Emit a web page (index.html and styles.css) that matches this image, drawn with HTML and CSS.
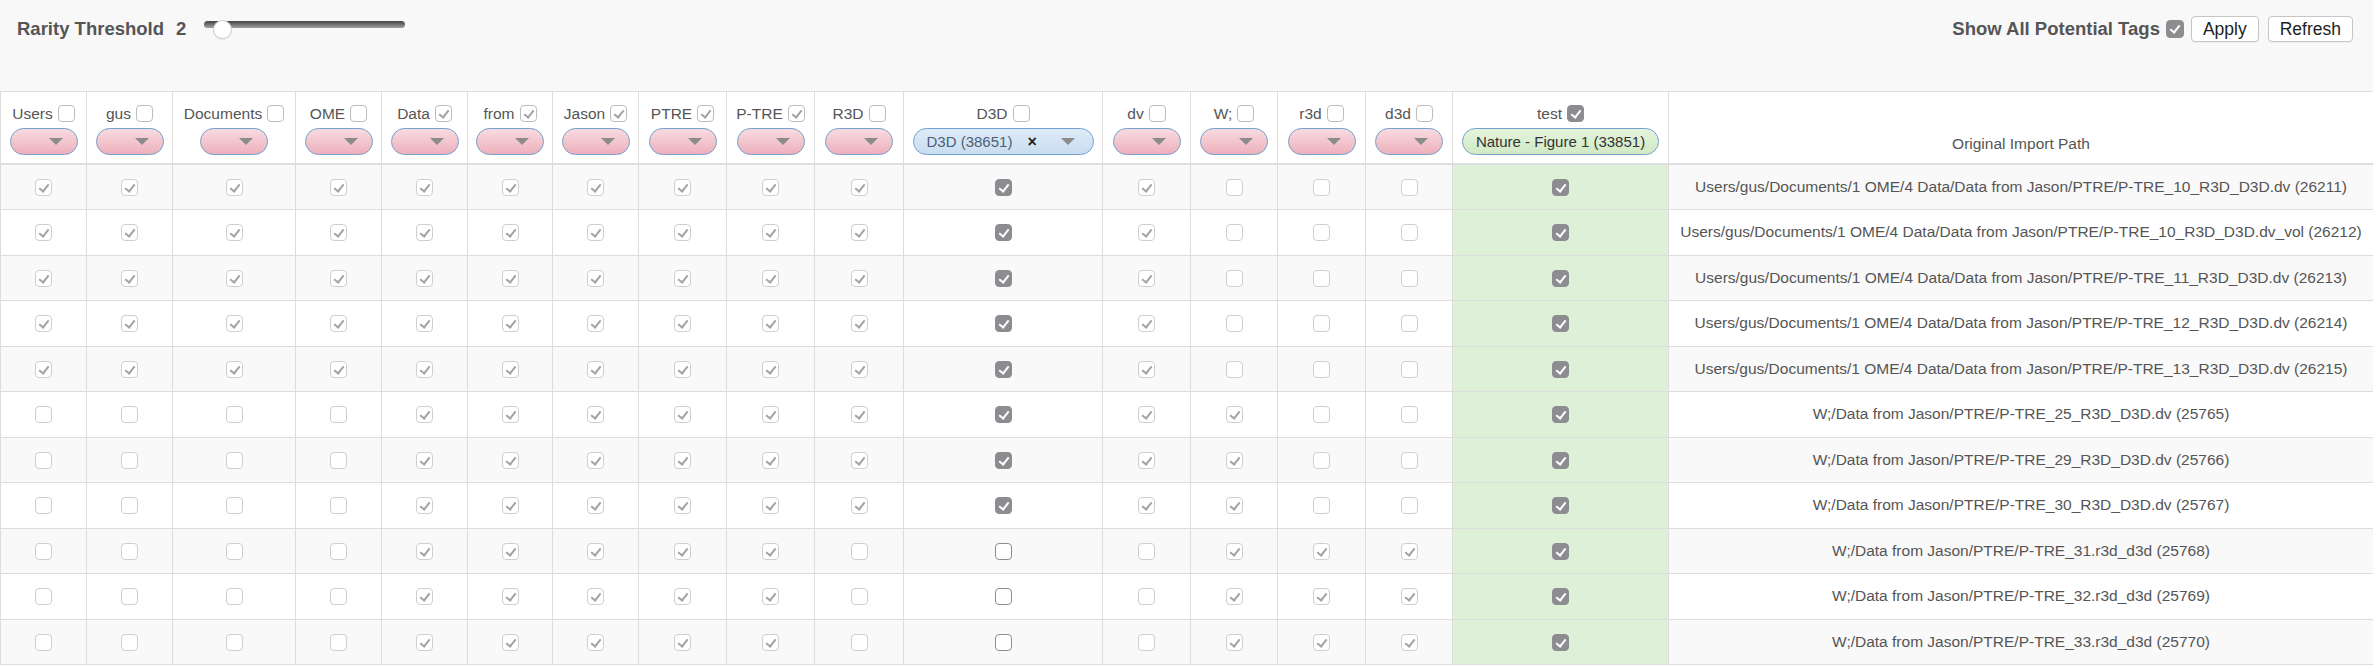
FILE: index.html
```html
<!DOCTYPE html>
<html>
<head>
<meta charset="utf-8">
<link rel="stylesheet" href="styles.css">
</head>
<body>
<div class="toolbar">
  <span class="title">Rarity Threshold</span>
  <span class="title val">2</span>
  <div class="slider"><div class="track"></div><div class="thumb"></div></div>
  <div class="spacer"></div>
  <span class="title">Show All Potential Tags</span>
  <span class="cb dark on topcb"></span>
  <button class="btn">Apply</button>
  <button class="btn">Refresh</button>
</div>
<table class="grid">
  <colgroup>
    <col style="width:86px"><col style="width:86px"><col style="width:123px"><col style="width:86px"><col style="width:86px"><col style="width:85px"><col style="width:86px"><col style="width:88px"><col style="width:88px"><col style="width:89px"><col style="width:199px"><col style="width:88px"><col style="width:87px"><col style="width:88px"><col style="width:87px"><col style="width:216px"><col style="width:705px">
  </colgroup>
  <thead>
    <tr>
      <th><div class="lbl">Users<span class="cb hd"></span></div><div class="pill pink"><span class="tri"></span></div></th>
      <th><div class="lbl">gus<span class="cb hd"></span></div><div class="pill pink"><span class="tri"></span></div></th>
      <th><div class="lbl">Documents<span class="cb hd"></span></div><div class="pill pink"><span class="tri"></span></div></th>
      <th><div class="lbl">OME<span class="cb hd"></span></div><div class="pill pink"><span class="tri"></span></div></th>
      <th><div class="lbl">Data<span class="cb hd on"></span></div><div class="pill pink"><span class="tri"></span></div></th>
      <th><div class="lbl">from<span class="cb hd on"></span></div><div class="pill pink"><span class="tri"></span></div></th>
      <th><div class="lbl">Jason<span class="cb hd on"></span></div><div class="pill pink"><span class="tri"></span></div></th>
      <th><div class="lbl">PTRE<span class="cb hd on"></span></div><div class="pill pink"><span class="tri"></span></div></th>
      <th><div class="lbl">P-TRE<span class="cb hd on"></span></div><div class="pill pink"><span class="tri"></span></div></th>
      <th><div class="lbl">R3D<span class="cb hd"></span></div><div class="pill pink"><span class="tri"></span></div></th>
      <th><div class="lbl">D3D<span class="cb hd"></span></div><div class="pill blue"><span class="ptxt">D3D (38651)</span><span class="x">×</span><span class="tri"></span></div></th>
      <th><div class="lbl">dv<span class="cb hd"></span></div><div class="pill pink"><span class="tri"></span></div></th>
      <th><div class="lbl">W;<span class="cb hd"></span></div><div class="pill pink"><span class="tri"></span></div></th>
      <th><div class="lbl">r3d<span class="cb hd"></span></div><div class="pill pink"><span class="tri"></span></div></th>
      <th><div class="lbl">d3d<span class="cb hd"></span></div><div class="pill pink"><span class="tri"></span></div></th>
      <th><div class="lbl">test<span class="cb dark on"></span></div><div class="pill green">Nature - Figure 1 (33851)</div></th>
      <th class="pathhd">Original Import Path</th>
    </tr>
  </thead>
  <tbody>
    <tr>
      <td><span class="cb on"></span></td><td><span class="cb on"></span></td><td><span class="cb on"></span></td><td><span class="cb on"></span></td><td><span class="cb on"></span></td><td><span class="cb on"></span></td><td><span class="cb on"></span></td><td><span class="cb on"></span></td><td><span class="cb on"></span></td><td><span class="cb on"></span></td>
      <td><span class="cb dark on"></span></td><td><span class="cb on"></span></td><td><span class="cb"></span></td><td><span class="cb"></span></td><td><span class="cb"></span></td>
      <td class="ok"><span class="cb dark on"></span></td>
      <td class="path">Users/gus/Documents/1 OME/4 Data/Data from Jason/PTRE/P-TRE_10_R3D_D3D.dv (26211)</td>
    </tr>
    <tr>
      <td><span class="cb on"></span></td><td><span class="cb on"></span></td><td><span class="cb on"></span></td><td><span class="cb on"></span></td><td><span class="cb on"></span></td><td><span class="cb on"></span></td><td><span class="cb on"></span></td><td><span class="cb on"></span></td><td><span class="cb on"></span></td><td><span class="cb on"></span></td>
      <td><span class="cb dark on"></span></td><td><span class="cb on"></span></td><td><span class="cb"></span></td><td><span class="cb"></span></td><td><span class="cb"></span></td>
      <td class="ok"><span class="cb dark on"></span></td>
      <td class="path">Users/gus/Documents/1 OME/4 Data/Data from Jason/PTRE/P-TRE_10_R3D_D3D.dv_vol (26212)</td>
    </tr>
    <tr>
      <td><span class="cb on"></span></td><td><span class="cb on"></span></td><td><span class="cb on"></span></td><td><span class="cb on"></span></td><td><span class="cb on"></span></td><td><span class="cb on"></span></td><td><span class="cb on"></span></td><td><span class="cb on"></span></td><td><span class="cb on"></span></td><td><span class="cb on"></span></td>
      <td><span class="cb dark on"></span></td><td><span class="cb on"></span></td><td><span class="cb"></span></td><td><span class="cb"></span></td><td><span class="cb"></span></td>
      <td class="ok"><span class="cb dark on"></span></td>
      <td class="path">Users/gus/Documents/1 OME/4 Data/Data from Jason/PTRE/P-TRE_11_R3D_D3D.dv (26213)</td>
    </tr>
    <tr>
      <td><span class="cb on"></span></td><td><span class="cb on"></span></td><td><span class="cb on"></span></td><td><span class="cb on"></span></td><td><span class="cb on"></span></td><td><span class="cb on"></span></td><td><span class="cb on"></span></td><td><span class="cb on"></span></td><td><span class="cb on"></span></td><td><span class="cb on"></span></td>
      <td><span class="cb dark on"></span></td><td><span class="cb on"></span></td><td><span class="cb"></span></td><td><span class="cb"></span></td><td><span class="cb"></span></td>
      <td class="ok"><span class="cb dark on"></span></td>
      <td class="path">Users/gus/Documents/1 OME/4 Data/Data from Jason/PTRE/P-TRE_12_R3D_D3D.dv (26214)</td>
    </tr>
    <tr>
      <td><span class="cb on"></span></td><td><span class="cb on"></span></td><td><span class="cb on"></span></td><td><span class="cb on"></span></td><td><span class="cb on"></span></td><td><span class="cb on"></span></td><td><span class="cb on"></span></td><td><span class="cb on"></span></td><td><span class="cb on"></span></td><td><span class="cb on"></span></td>
      <td><span class="cb dark on"></span></td><td><span class="cb on"></span></td><td><span class="cb"></span></td><td><span class="cb"></span></td><td><span class="cb"></span></td>
      <td class="ok"><span class="cb dark on"></span></td>
      <td class="path">Users/gus/Documents/1 OME/4 Data/Data from Jason/PTRE/P-TRE_13_R3D_D3D.dv (26215)</td>
    </tr>
    <tr>
      <td><span class="cb"></span></td><td><span class="cb"></span></td><td><span class="cb"></span></td><td><span class="cb"></span></td><td><span class="cb on"></span></td><td><span class="cb on"></span></td><td><span class="cb on"></span></td><td><span class="cb on"></span></td><td><span class="cb on"></span></td><td><span class="cb on"></span></td>
      <td><span class="cb dark on"></span></td><td><span class="cb on"></span></td><td><span class="cb on"></span></td><td><span class="cb"></span></td><td><span class="cb"></span></td>
      <td class="ok"><span class="cb dark on"></span></td>
      <td class="path">W;/Data from Jason/PTRE/P-TRE_25_R3D_D3D.dv (25765)</td>
    </tr>
    <tr>
      <td><span class="cb"></span></td><td><span class="cb"></span></td><td><span class="cb"></span></td><td><span class="cb"></span></td><td><span class="cb on"></span></td><td><span class="cb on"></span></td><td><span class="cb on"></span></td><td><span class="cb on"></span></td><td><span class="cb on"></span></td><td><span class="cb on"></span></td>
      <td><span class="cb dark on"></span></td><td><span class="cb on"></span></td><td><span class="cb on"></span></td><td><span class="cb"></span></td><td><span class="cb"></span></td>
      <td class="ok"><span class="cb dark on"></span></td>
      <td class="path">W;/Data from Jason/PTRE/P-TRE_29_R3D_D3D.dv (25766)</td>
    </tr>
    <tr>
      <td><span class="cb"></span></td><td><span class="cb"></span></td><td><span class="cb"></span></td><td><span class="cb"></span></td><td><span class="cb on"></span></td><td><span class="cb on"></span></td><td><span class="cb on"></span></td><td><span class="cb on"></span></td><td><span class="cb on"></span></td><td><span class="cb on"></span></td>
      <td><span class="cb dark on"></span></td><td><span class="cb on"></span></td><td><span class="cb on"></span></td><td><span class="cb"></span></td><td><span class="cb"></span></td>
      <td class="ok"><span class="cb dark on"></span></td>
      <td class="path">W;/Data from Jason/PTRE/P-TRE_30_R3D_D3D.dv (25767)</td>
    </tr>
    <tr>
      <td><span class="cb"></span></td><td><span class="cb"></span></td><td><span class="cb"></span></td><td><span class="cb"></span></td><td><span class="cb on"></span></td><td><span class="cb on"></span></td><td><span class="cb on"></span></td><td><span class="cb on"></span></td><td><span class="cb on"></span></td><td><span class="cb"></span></td>
      <td><span class="cb dark"></span></td><td><span class="cb"></span></td><td><span class="cb on"></span></td><td><span class="cb on"></span></td><td><span class="cb on"></span></td>
      <td class="ok"><span class="cb dark on"></span></td>
      <td class="path">W;/Data from Jason/PTRE/P-TRE_31.r3d_d3d (25768)</td>
    </tr>
    <tr>
      <td><span class="cb"></span></td><td><span class="cb"></span></td><td><span class="cb"></span></td><td><span class="cb"></span></td><td><span class="cb on"></span></td><td><span class="cb on"></span></td><td><span class="cb on"></span></td><td><span class="cb on"></span></td><td><span class="cb on"></span></td><td><span class="cb"></span></td>
      <td><span class="cb dark"></span></td><td><span class="cb"></span></td><td><span class="cb on"></span></td><td><span class="cb on"></span></td><td><span class="cb on"></span></td>
      <td class="ok"><span class="cb dark on"></span></td>
      <td class="path">W;/Data from Jason/PTRE/P-TRE_32.r3d_d3d (25769)</td>
    </tr>
    <tr>
      <td><span class="cb"></span></td><td><span class="cb"></span></td><td><span class="cb"></span></td><td><span class="cb"></span></td><td><span class="cb on"></span></td><td><span class="cb on"></span></td><td><span class="cb on"></span></td><td><span class="cb on"></span></td><td><span class="cb on"></span></td><td><span class="cb"></span></td>
      <td><span class="cb dark"></span></td><td><span class="cb"></span></td><td><span class="cb on"></span></td><td><span class="cb on"></span></td><td><span class="cb on"></span></td>
      <td class="ok"><span class="cb dark on"></span></td>
      <td class="path">W;/Data from Jason/PTRE/P-TRE_33.r3d_d3d (25770)</td>
    </tr>
  </tbody>
</table>
</body>
</html>
```
FILE: styles.css
```css
html, body {
  margin: 0;
  padding: 0;
  background: #f8f8f8;
  font-family: "Liberation Sans", Arial, sans-serif;
  color: #555;
}

.toolbar {
  display: flex;
  align-items: center;
  height: 58px;
  padding: 0 20px 0 17px;
}

.title {
  font-weight: bold;
  font-size: 18.5px;
  color: #555;
  white-space: nowrap;
}

.val {
  margin-left: 12px;
}

.slider {
  position: relative;
  width: 201px;
  height: 40px;
  margin-left: 18px;
}

.track {
  position: absolute;
  left: 0;
  right: 0;
  top: 12px;
  height: 7px;
  border-radius: 3.5px;
  background: linear-gradient(#444, #a0a0a0);
}

.thumb {
  position: absolute;
  left: 9px;
  top: 11px;
  width: 19px;
  height: 19px;
  box-sizing: border-box;
  border-radius: 50%;
  background: #fff;
  border: 1px solid #cfcfcf;
  box-shadow: 0 1px 1px rgba(0, 0, 0, 0.08);
}

.spacer {
  flex: 1;
}

.cb {
  display: inline-block;
  position: relative;
  width: 17px;
  height: 17px;
  box-sizing: border-box;
  border: 1px solid #cfcfcf;
  border-radius: 4px;
  background: #fff;
  vertical-align: middle;
}

.cb.on::after {
  content: "";
  position: absolute;
  left: 5px;
  top: 2px;
  width: 4px;
  height: 8px;
  border-right: 2px solid #a2a2a2;
  border-bottom: 2px solid #a2a2a2;
  transform: rotate(38deg);
}

.cb.hd {
  border-color: #bdbdbd;
  margin-left: 5px;
  margin-top: -3px;
}

.cb.dark {
  border-color: #8e8e8e;
}

.cb.dark.on {
  background: #8d8d91;
  border-color: #8d8d91;
}

.cb.dark.on::after {
  border-color: #fff;
}

.lbl .cb.dark {
  margin-left: 5px;
  margin-top: -3px;
}

.topcb {
  width: 18px;
  height: 18px;
  margin-left: 6px;
}

.btn {
  margin-left: 7px;
  height: 26px;
  padding: 0 11px;
  font-family: "Liberation Sans", Arial, sans-serif;
  font-size: 17.5px;
  line-height: 24px;
  color: #1e1e1e;
  background: #fff;
  border: 1px solid #c6c6c6;
  border-radius: 4px;
  box-shadow: 0 1px 1px rgba(0, 0, 0, 0.05);
}

.btn + .btn {
  margin-left: 9px;
}

.grid {
  margin-top: 33px;
  width: 2373px;
  border-collapse: collapse;
  table-layout: fixed;
  background: #fff;
  font-size: 15.5px;
}

.grid th,
.grid td {
  border: 1px solid #ddd;
  text-align: center;
  color: #555;
}

.grid th {
  font-weight: normal;
  padding: 8px 4px 8px;
  vertical-align: bottom;
  border-bottom: 2px solid #ddd;
  background: #fff;
}

.lbl {
  line-height: 28px;
  white-space: nowrap;
}

.pill {
  display: flex;
  align-items: center;
  justify-content: flex-end;
  box-sizing: border-box;
  width: 68px;
  height: 27px;
  margin: 0 auto;
  padding-right: 14px;
  border: 1.5px solid #74a1cf;
  border-radius: 14px;
}

.pill.pink {
  background: linear-gradient(#f8dbe1, #edb0bb);
}

.pill.blue {
  width: 181px;
  justify-content: flex-start;
  padding-left: 13px;
  padding-right: 18px;
  background: linear-gradient(#dfebf7, #c9ddf0);
}

.pill.green {
  width: 197px;
  justify-content: center;
  padding: 0;
  color: #333;
  font-size: 15px;
  background: linear-gradient(#e5f4dd, #d0e9c4);
}

.ptxt {
  color: #4b6078;
  font-size: 15px;
}

.x {
  margin-left: 15px;
  font-weight: bold;
  color: #222;
  font-size: 16px;
}

.pill.blue .tri {
  margin-left: auto;
}

.tri {
  width: 0;
  height: 0;
  border-left: 7.5px solid transparent;
  border-right: 7.5px solid transparent;
  border-top: 7px solid #8b8b8b;
}

.pathhd {
  line-height: 22px;
}

.grid td {
  height: 45.5px;
  padding: 0 8px;
  vertical-align: middle;
  box-sizing: border-box;
}

.grid tbody tr:nth-child(odd) td {
  background: #f9f9f9;
}

.grid tbody tr td.ok,
.grid tbody tr:nth-child(odd) td.ok {
  background: #dff0d8;
}

.grid td.path {
  white-space: nowrap;
}
```
